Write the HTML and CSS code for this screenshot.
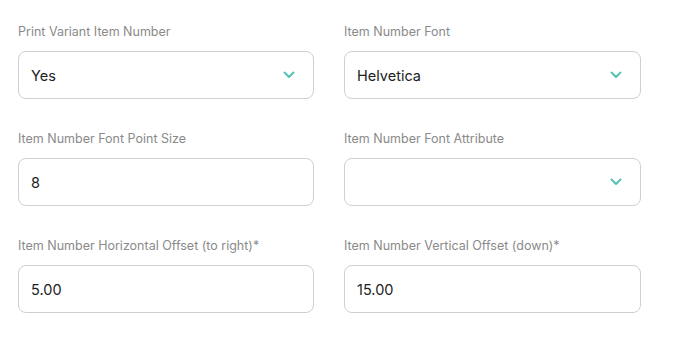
FILE: index.html
```html
<!DOCTYPE html>
<html>
<head>
    <meta charset="UTF-8">
    <meta name="viewport" content="width=device-width, initial-scale=1.0">
    <title>Item Number</title>
    <link rel="stylesheet" href="styles.css">
</head>
<body>
    <div class="form">
        <div class="field">
            <div class="label">Print Variant Item Number</div>
            <div class="box select">
                <span class="value">Yes</span>
                <svg class="chevron" width="12" height="8" viewBox="0 0 12 8"><path d="M1.5 1.5 L6 6 L10.5 1.5" fill="none" stroke="#55c4b4" stroke-width="2" stroke-linecap="round" stroke-linejoin="round"/></svg>
            </div>
        </div>
        <div class="field">
            <div class="label">Item Number Font</div>
            <div class="box select">
                <span class="value">Helvetica</span>
                <svg class="chevron" width="12" height="8" viewBox="0 0 12 8"><path d="M1.5 1.5 L6 6 L10.5 1.5" fill="none" stroke="#55c4b4" stroke-width="2" stroke-linecap="round" stroke-linejoin="round"/></svg>
            </div>
        </div>
        <div class="field">
            <div class="label">Item Number Font Point Size</div>
            <div class="box">
                <span class="value">8</span>
            </div>
        </div>
        <div class="field">
            <div class="label">Item Number Font Attribute</div>
            <div class="box select">
                <span class="value"></span>
                <svg class="chevron" width="12" height="8" viewBox="0 0 12 8"><path d="M1.5 1.5 L6 6 L10.5 1.5" fill="none" stroke="#55c4b4" stroke-width="2" stroke-linecap="round" stroke-linejoin="round"/></svg>
            </div>
        </div>
        <div class="field">
            <div class="label">Item Number Horizontal Offset (to right)*</div>
            <div class="box">
                <span class="value">5.00</span>
            </div>
        </div>
        <div class="field">
            <div class="label">Item Number Vertical Offset (down)*</div>
            <div class="box">
                <span class="value">15.00</span>
            </div>
        </div>
    </div>
</body>
</html>
```

FILE: styles.css
```css
body {
    margin: 0;
    font-family: Inter, "Noto Sans", sans-serif;
    background: #fff;
}
.form {
    display: grid;
    grid-template-columns: 296px 297px;
    column-gap: 30px;
    row-gap: 30px;
    padding: 22px 0 0 18px;
}
.label {
    font-size: 12.5px;
    line-height: 20px;
    color: #8a8a8a;
    margin-bottom: 9px;
}
.box {
    height: 48px;
    box-sizing: border-box;
    border: 1px solid #cfcfcf;
    border-radius: 8px;
    display: flex;
    align-items: center;
    justify-content: space-between;
    padding: 0 18px 0 12px;
}
.value {
    font-size: 14.5px;
    color: #222;
}
.chevron {
    display: block;
}
```
